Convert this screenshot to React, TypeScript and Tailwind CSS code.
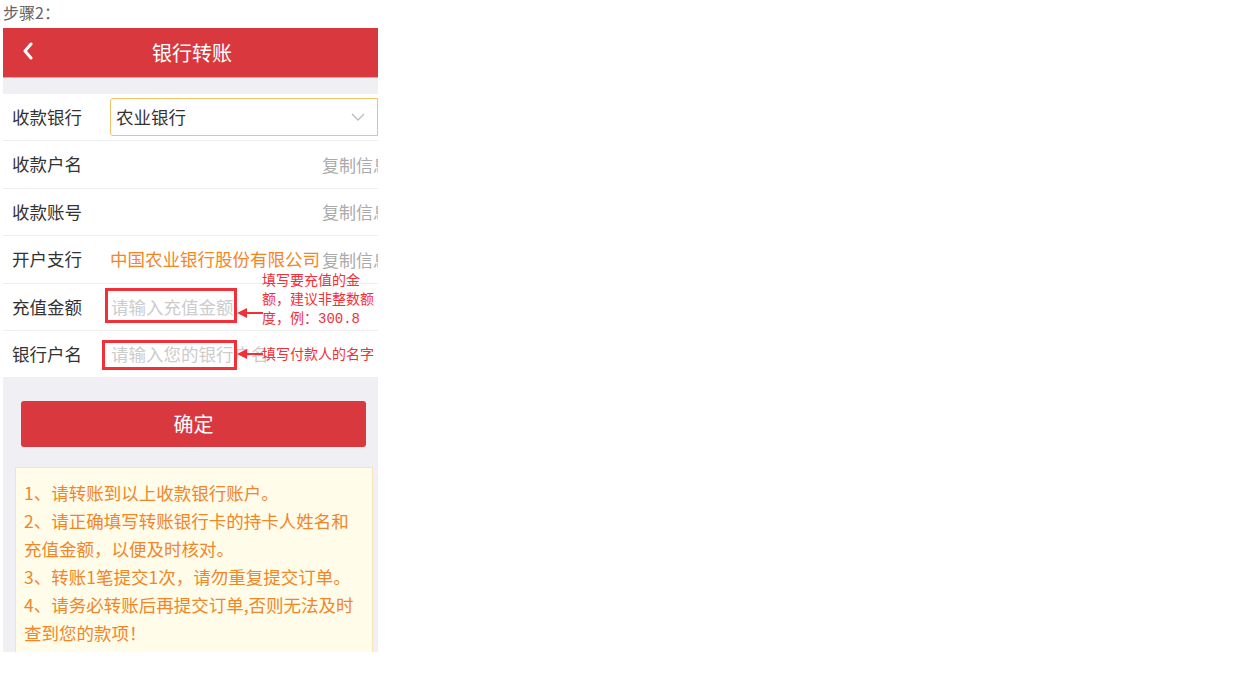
import React from "react";

const cjk = { fontFamily: '"Noto Sans CJK SC", "Noto Sans", sans-serif' };
const mono = { fontFamily: '"Liberation Mono", "Noto Sans CJK SC", monospace' };

function Row({ label, children }: { label: string; children?: React.ReactNode }) {
  return (
    <div className="flex h-[47.4px] items-center border-b border-[#eeeeee] bg-white">
      <div className="w-[107px] shrink-0 pl-[9px] text-[17.5px] text-[#333]">{label}</div>
      <div className="relative flex h-full min-w-0 flex-1 items-center">{children}</div>
    </div>
  );
}

function Copy() {
  return (
    <span className="absolute left-[212px] whitespace-nowrap text-[17px] text-[#aaa]">复制信息</span>
  );
}

export default function App() {
  return (
    <div className="min-h-[674px] bg-white" style={cjk}>
      <div className="h-[28px] pl-[3px] text-[16px] leading-[24px] text-[#666]">步骤2：</div>
      <div className="ml-[3px] h-[624px] w-[375px] overflow-hidden bg-[#efeff4]">
        <div className="relative">
          {/* header */}
          <div className="relative flex h-[49px] items-center justify-center bg-[#d9393e]">
            <svg className="absolute left-[18px] top-[14px]" width="14" height="18" viewBox="0 0 14 18">
              <polyline points="10,2 4,9 10,16" fill="none" stroke="#fff" strokeWidth="3" strokeLinecap="round" strokeLinejoin="round" />
            </svg>
            <span className="pl-[3px] text-[20px] text-white">银行转账</span>
          </div>
          <div className="h-px bg-[#f0a0a3]" />
          <div className="h-[16px]" />

          <Row label="收款银行">
            <div className="flex h-[38px] w-[280px] items-center rounded-l-[3px] border border-[#f3c266] bg-white pl-[5px]">
              <span className="text-[17.5px] text-[#333]">农业银行</span>
              <svg className="ml-[164px]" width="16" height="10" viewBox="0 0 16 10">
                <polyline points="2,2 8,8 14,2" fill="none" stroke="#bbb" strokeWidth="1.3" />
              </svg>
            </div>
          </Row>
          <Row label="收款户名">
            <Copy />
          </Row>
          <Row label="收款账号">
            <Copy />
          </Row>
          <Row label="开户支行">
            <span className="whitespace-nowrap text-[17.5px] text-[#f5851f]">中国农业银行股份有限公司</span>
            <Copy />
          </Row>
          <Row label="充值金额">
            <span className="pl-px text-[17.5px] text-[#cccccc]">请输入充值金额</span>
          </Row>
          <Row label="银行户名">
            <span className="pl-px whitespace-nowrap text-[17.5px] text-[#cccccc]">请输入您的银行户名</span>
          </Row>

          <div className="px-[18px] pt-[23px]">
            <div className="flex h-[46px] w-[345px] items-center justify-center rounded-[3px] bg-[#d9393e] text-[20px] text-white">
              确定
            </div>
          </div>

          <div className="ml-[12px] mt-[20px] w-[358px] border border-[#fde3b4] bg-[#fffcea] px-[8px] pt-[11px] pb-[20px] text-[17.5px] leading-[28px] text-[#f0862a]">
            <p>1、请转账到以上收款银行账户。</p>
            <p>2、请正确填写转账银行卡的持卡人姓名和充值金额，以便及时核对。</p>
            <p>3、转账1笔提交1次，请勿重复提交订单。</p>
            <p>4、请务必转账后再提交订单,否则无法及时查到您的款项！</p>
          </div>

          {/* annotations */}
          <div className="absolute left-[102px] top-[260px] h-[35px] w-[132px] border-[3px] border-[#f23037]" />
          <div className="absolute left-[99px] top-[312px] h-[30px] w-[135px] border-[3px] border-[#f23037]" />
          <svg className="absolute left-[234px] top-[278px]" width="26" height="14" viewBox="0 0 26 14">
            <line x1="8" y1="7" x2="26" y2="7" stroke="#f23037" strokeWidth="2" />
            <polygon points="0,7 10,2 10,12" fill="#f23037" />
          </svg>
          <div className="absolute left-[234px] top-[319px]">
            <svg width="26" height="14" viewBox="0 0 26 14">
              <line x1="8" y1="7" x2="26" y2="7" stroke="#f23037" strokeWidth="2" />
              <polygon points="0,7 10,2 10,12" fill="#f23037" />
            </svg>
          </div>
          <div className="absolute left-[259px] top-[244px] text-[14px] leading-[19px] text-[#f23037]" style={mono}>
            <div>填写要充值的金</div>
            <div>额，建议非整数额</div>
            <div>度，例：300.8</div>
          </div>
          <div className="absolute left-[259px] top-[318px] whitespace-nowrap text-[14px] leading-[19px] text-[#f23037]" style={mono}>
            填写付款人的名字
          </div>
        </div>
      </div>
    </div>
  );
}
